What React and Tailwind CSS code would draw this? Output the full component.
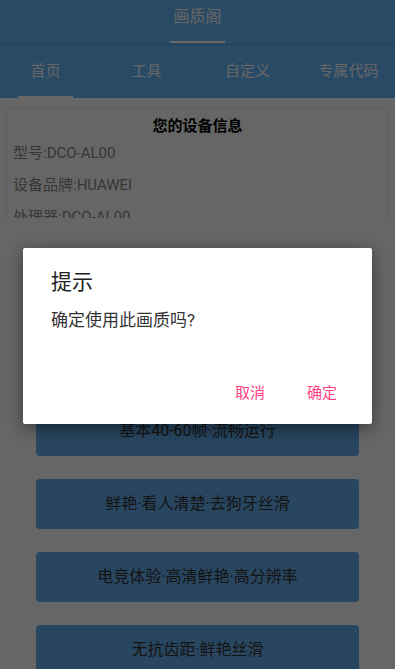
const tabs = ['首页', '工具', '自定义', '专属代码'];

const presets = [
  '极致画质·超高帧率',
  '均衡画质·稳定帧率',
  '基本40-60帧·流畅运行',
  '鲜艳·看人清楚·去狗牙丝滑',
  '电竞体验·高清鲜艳·高分辨率',
  '无抗齿距·鲜艳丝滑',
];

const font = { fontFamily: 'Roboto, "Noto Sans CJK SC", sans-serif' };

const App = () => {
  return (
    <div className="relative h-[669px] overflow-hidden bg-white" style={font}>
      {/* title bar */}
      <div className="h-[44px] bg-[#68b8fc] flex flex-col items-center">
        <div className="pt-[6px] text-[16px] leading-[22px] text-white">画质阁</div>
        <div className="mt-auto mb-[1px] w-[55px] h-[2px] bg-white" />
      </div>
      <div className="h-[1px] bg-[#5aa4e4]" />

      {/* tabs */}
      <div className="h-[53px] bg-[#68b8fc] flex ml-[-5px]">
        {tabs.map((tab, i) => (
          <div key={tab} className="relative w-[101px] shrink-0 flex items-center justify-center">
            <span className="text-[15px] text-white">{tab}</span>
            {i === 0 && (
              <div className="absolute bottom-0 left-[23px] w-[55px] h-[2px] bg-white" />
            )}
          </div>
        ))}
      </div>

      {/* device info */}
      <div className="mt-[10px] mx-[6px] h-[110px] overflow-hidden">
        <div className="rounded-md border border-black/10 px-[6px] pb-4">
          <div className="pt-[6px] text-center text-[15px] leading-[22px] font-bold text-black">
            您的设备信息
          </div>
          <div className="text-[15px] leading-[32px] text-[#8a8a8a]">型号:DCO-AL00</div>
          <div className="text-[15px] leading-[32px] text-[#8a8a8a]">设备品牌:HUAWEI</div>
          <div className="text-[15px] leading-[32px] text-[#8a8a8a]">处理器:DCO-AL00</div>
          <div className="text-[15px] leading-[32px] text-[#8a8a8a]">系统版本:10</div>
        </div>
      </div>

      {/* presets */}
      <div className="mt-[42px] mx-[36px] flex flex-col gap-[23px]">
        {presets.map((p) => (
          <div
            key={p}
            className="h-[50px] rounded bg-[#64aff0] flex items-center justify-center text-[16px] text-[#333]"
          >
            {p}
          </div>
        ))}
      </div>

      {/* dialog scrim */}
      <div className="absolute inset-0 bg-black/60 flex items-center justify-center pt-[3px]">
        <div className="w-[349px] h-[176px] bg-white rounded-[2px] shadow-[0_4px_16px_rgba(0,0,0,0.45)] flex flex-col">
          <div className="pl-[28px] pt-[20px] text-[21px] leading-[28px] text-[#222]">提示</div>
          <div className="pl-[28px] mt-[12px] text-[17px] leading-[24px] text-[#333]">确定使用此画质吗?</div>
          <div className="mt-auto mb-[13px] mr-[27px] flex justify-end gap-[26px]">
            <button className="h-[36px] px-[8px] text-[15px] text-[#ff4081]">取消</button>
            <button className="h-[36px] px-[8px] text-[15px] text-[#ff4081]">确定</button>
          </div>
        </div>
      </div>
    </div>
  );
};

export default App;
